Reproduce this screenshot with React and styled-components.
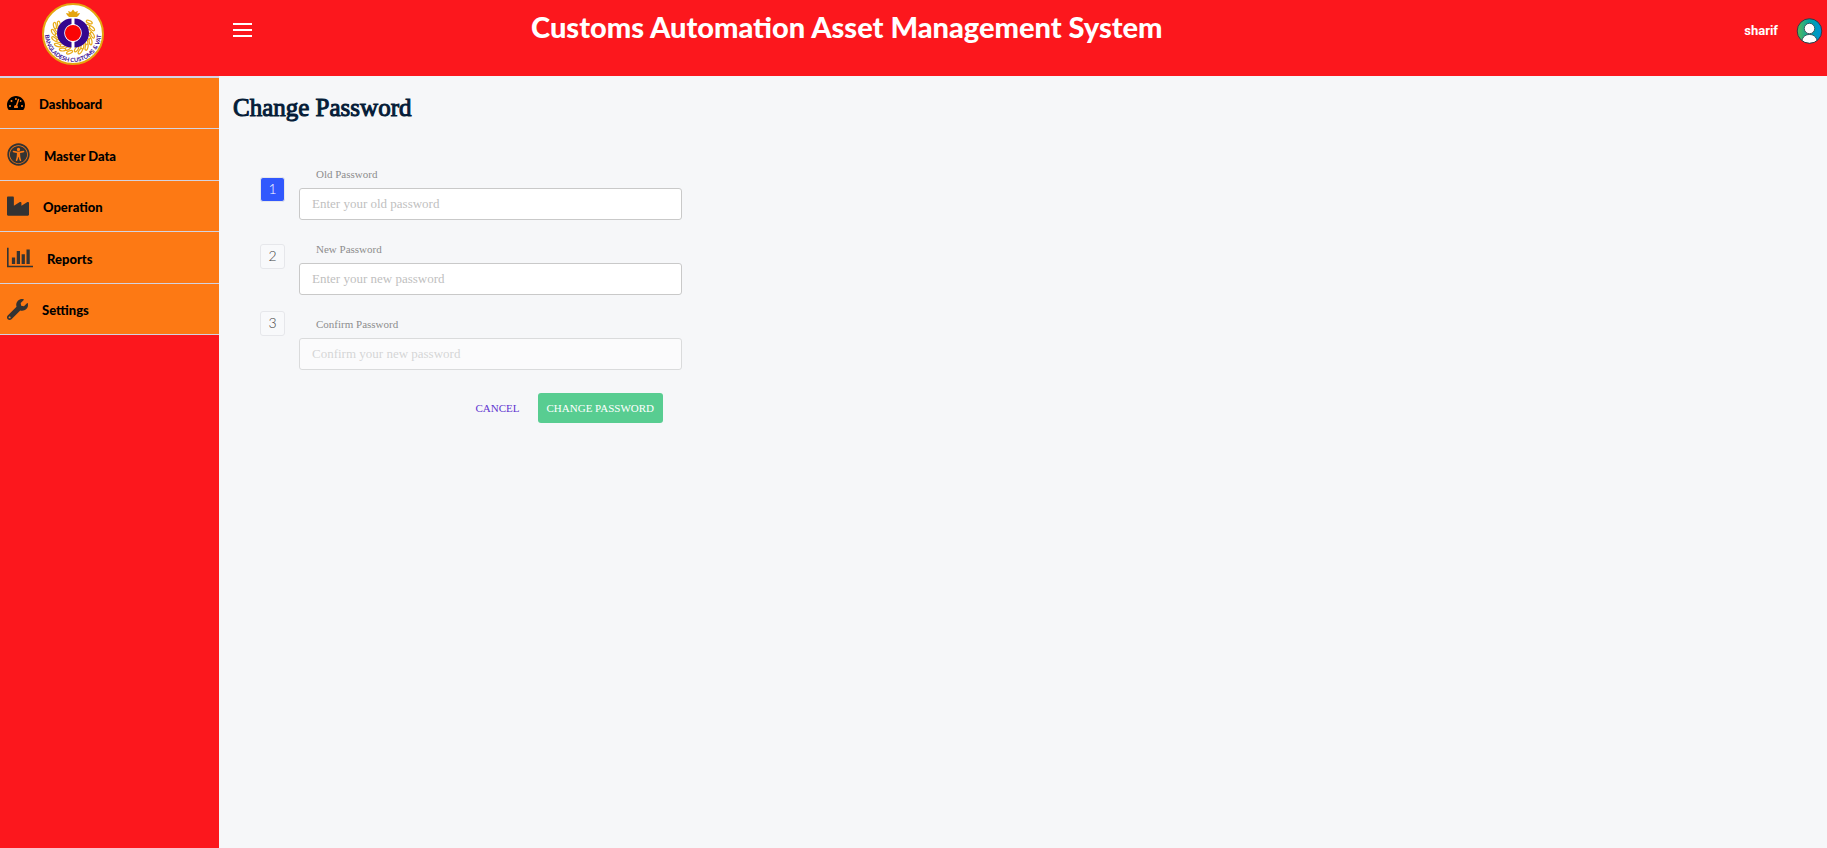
import React from 'react'
import styled, { createGlobalStyle } from 'styled-components'
import { FaTachometerAlt, FaUniversalAccess, FaIndustry, FaWrench } from 'react-icons/fa'

const BarChart = ({ size }) => (
    <svg width="26" height={size} viewBox="0 0 2048 1792" fill="currentColor" aria-hidden="true">
        <path d="M640 896v512H384V896zM1024 384v1024H768V384zM2048 1536v128H0V128h128v1408zM1408 640v768h-256V640zM1792 256v1152h-256V256z" />
    </svg>
)

const menu = [
    { label: 'Dashboard', icon: FaTachometerAlt, size: 18, color: '#000' },
    { label: 'Master Data', icon: FaUniversalAccess, size: 23 },
    { label: 'Operation', icon: FaIndustry, size: 22 },
    { label: 'Reports', icon: BarChart, size: 23 },
    { label: 'Settings', icon: FaWrench, size: 21 },
]

const steps = [
    { id: 'old', label: 'Old Password', placeholder: 'Enter your old password', active: true },
    { id: 'new', label: 'New Password', placeholder: 'Enter your new password' },
    { id: 'confirm', label: 'Confirm Password', placeholder: 'Confirm your new password', disabled: true },
]

const leaves = [-118, -98, -78, -58, -38, -16, 16, 38, 58, 78, 98, 118]

const Logo = () => (
    <svg width="62" height="62" viewBox="0 0 62 62" role="img" aria-label="Bangladesh Customs & VAT">
        <defs>
            <path id="motto" d="M3 31a28 28 0 0 0 56 0" />
        </defs>
        <circle cx="31" cy="31" r="30" fill="#fff" stroke="#e5a50f" strokeWidth="2" />
        {leaves.map((a) => (
            <g key={a} transform={`rotate(${a + 180} 31 30)`} fill="#fff" stroke="#e9ac18" strokeWidth="1.2">
                <ellipse cx="29" cy="10.5" rx="1.4" ry="3.2" transform="rotate(50 29 10.5)" />
                <ellipse cx="32" cy="13.5" rx="1.4" ry="3.2" transform="rotate(50 32 13.5)" />
            </g>
        ))}
        <path d="M27 14l-2-2-1-2 3 .5-1-2.500 3 1 2-2.500 2 2.500 3-1-1 2.500 3-.5-1 2-2 2z" fill="#e5a50f" />
        <path d="M29.500 15.500a14.500 14.500 0 0 0 0 29v-5.500a9.200 9.200 0 0 1 0-18zM32.500 15.500a14.500 14.500 0 0 1 0 29v-5.500a9.200 9.200 0 0 0 0-18z" fill="#35078f" />
        <circle cx="31" cy="30" r="8" fill="#fb0505" />
        <text fill="#35078f" fontSize="5.8" fontWeight="700" fontFamily="Lato, sans-serif">
            <textPath href="#motto" startOffset="50%" textAnchor="middle">BANGLADESH CUSTOMS &amp; VAT</textPath>
        </text>
    </svg>
)

const Avatar = () => (
    <svg width="27" height="26" viewBox="0 0 27 26" aria-hidden="true">
        <defs>
            <linearGradient id="avatarFill">
                <stop offset="0" stopColor="#5bb957" />
                <stop offset="0.5" stopColor="#00a3a3" />
                <stop offset="1" stopColor="#0093d8" />
            </linearGradient>
            <clipPath id="avatarClip"><circle cx="13.5" cy="13" r="12" /></clipPath>
        </defs>
        <circle cx="13.5" cy="13" r="12.2" fill="url(#avatarFill)" />
        <g clipPath="url(#avatarClip)" fill="#fff" stroke="#333a46" strokeWidth="0.8">
            <path d="M5.5 26c0-6 3-9.5 8-9.5s8 3.5 8 9.5z" />
            <circle cx="13.5" cy="10.5" r="5.2" />
        </g>
        <circle cx="13.5" cy="13" r="12.3" fill="none" stroke="#333a46" />
    </svg>
)

const App = () => {
    return (
        <>
            <GlobalStyle />
            <Page>
                <Header>
                    <Brand href="#"><Logo /></Brand>
                    <MenuButton type="button" aria-label="Toggle menu">
                        <span /><span /><span />
                    </MenuButton>
                    <Title>Customs Automation Asset Management System</Title>
                    <User href="#">
                        sharif
                        <Avatar />
                    </User>
                </Header>
                <Body>
                    <Sidebar>
                        {menu.map(({ label, icon: Icon, size, color }) => (
                            <MenuItem key={label} href="#" $color={color}>
                                <Icon size={size} />
                                <span>{label}</span>
                            </MenuItem>
                        ))}
                    </Sidebar>
                    <Main>
                        <Heading>Change Password</Heading>
                        <Form onSubmit={(e) => e.preventDefault()}>
                            <Steps>
                                {steps.map((step, i) => (
                                    <Step key={step.id} $active={step.active}>{i + 1}</Step>
                                ))}
                            </Steps>
                            <Fields>
                                {steps.map((step) => (
                                    <Field key={step.id}>
                                        <Label htmlFor={step.id}>{step.label}</Label>
                                        <Input id={step.id} type="password" placeholder={step.placeholder} disabled={step.disabled} />
                                    </Field>
                                ))}
                                <Actions>
                                    <Cancel href="#">CANCEL</Cancel>
                                    <Submit type="submit">CHANGE PASSWORD</Submit>
                                </Actions>
                            </Fields>
                        </Form>
                    </Main>
                </Body>
            </Page>
        </>
    )
}

export default App

const GlobalStyle = createGlobalStyle`
    * {
        box-sizing: border-box;
    }
    body {
        margin: 0;
        background: #f6f7f9;
        font-family: "Liberation Serif", serif;
    }
    a {
        text-decoration: none;
    }
`

const Page = styled.div`
    display: flex;
    flex-direction: column;
    min-height: 100vh;
`

const Header = styled.header`
    display: flex;
    align-items: flex-start;
    height: 76px;
    background: #fc171d;
    color: #fff;
`

const Brand = styled.a`
    flex: 0 0 219px;
    padding: 3px 0 0 42px;
`

const MenuButton = styled.button`
    display: flex;
    flex-direction: column;
    gap: 4px;
    margin: 23px 0 0 14px;
    padding: 0;
    border: 0;
    background: none;
    cursor: pointer;
    span {
        width: 19px;
        height: 2px;
        background: #fff;
    }
`

const Title = styled.h1`
    flex: 1;
    margin: 0;
    padding: 7px 0 0 279px;
    font: 900 29px/40px Lato, sans-serif;
    white-space: nowrap;
`

const User = styled.a`
    display: flex;
    align-items: center;
    gap: 18px;
    padding: 18px 4px 0 0;
    color: #fff;
    font: 700 13px/24px Roboto, sans-serif;
`

const Body = styled.div`
    display: flex;
    flex: 1;
`

const Sidebar = styled.nav`
    flex: 0 0 219px;
    border-top: 2px solid #d3d3e6;
    background: #fc171d;
`

const MenuItem = styled.a`
    display: flex;
    align-items: center;
    gap: 14px;
    min-height: 51px;
    padding: 14px 7px;
    border-bottom: 1px solid #d3d3e0;
    background: #fd7914;
    color: ${(p) => p.$color || '#333'};
    font: 900 13px/18px Lato, sans-serif;
    span {
        padding-top: 2px;
        color: #000;
    }
`

const Main = styled.main`
    flex: 1;
    padding: 14px;
`

const Heading = styled.h2`
    margin: 0;
    color: #051c38;
    font-size: 25px;
    font-weight: 400;
    line-height: 36px;
    -webkit-text-stroke: 1px #051c38;
`

const Form = styled.form`
    display: flex;
    gap: 14px;
    padding: 40px 0 0 27px;
`

const Steps = styled.div`
    display: flex;
    flex-direction: column;
    gap: 42px;
    padding-top: 11px;
`

const Step = styled.div`
    width: 25px;
    height: 25px;
    border: 1px solid #e6e7eb;
    border-radius: 3px;
    background: ${(p) => (p.$active ? '#3158fd' : '#f8f9fb')};
    color: ${(p) => (p.$active ? '#fff' : '#444')};
    font: 300 14px/22px Lato, sans-serif;
    text-align: center;
`

const Fields = styled.div`
    flex: 0 1 383px;
`

const Field = styled.div`
    margin-bottom: 21px;
`

const Label = styled.label`
    display: block;
    padding: 0 17px 5px;
    color: #8d8d8d;
    font-size: 11px;
    line-height: 17px;
`

const Input = styled.input`
    display: block;
    width: 100%;
    height: 32px;
    padding: 0 12px;
    border: 1px solid #c9c9c9;
    border-radius: 3px;
    background: #fff;
    font: 13px "Liberation Serif", serif;
    &::placeholder {
        color: #bfbfbf;
    }
    &:disabled {
        opacity: 0.6;
    }
`

const Actions = styled.div`
    display: flex;
    justify-content: flex-end;
    align-items: center;
    gap: 18px;
    padding: 2px 19px 0 0;
`

const Cancel = styled.a`
    color: #5f35d0;
    font-size: 11px;
`

const Submit = styled.button`
    height: 30px;
    padding: 0 9px;
    border: 0;
    border-radius: 3px;
    background: #58cd91;
    color: #fff;
    font: 11px "Liberation Serif", serif;
    white-space: nowrap;
    cursor: pointer;
`
